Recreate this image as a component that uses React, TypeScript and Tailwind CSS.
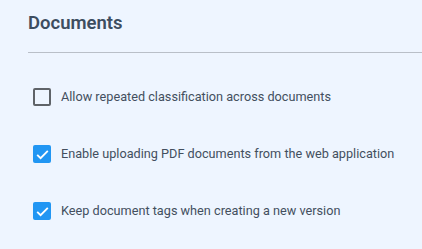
import { useState } from 'react'

const options = [
  { id: 'repeat', label: 'Allow repeated classification across documents', checked: false },
  { id: 'pdf', label: 'Enable uploading PDF documents from the web application', checked: true },
  { id: 'tags', label: 'Keep document tags when creating a new version', checked: true },
]

function Checkbox({ checked, onToggle }: { checked: boolean; onToggle: () => void }) {
  return (
    <button
      onClick={onToggle}
      className={`w-[18px] h-[18px] rounded-[2px] flex items-center justify-center shrink-0 ${
        checked ? 'bg-[#2196f3]' : 'border-2 border-[#5f6368]'
      }`}
    >
      {checked && (
        <svg viewBox="0 0 24 24" className="w-[17px] h-[17px]" fill="none" stroke="white" strokeWidth="2.6">
          <path d="M4.5 12.5l4.8 4.8L19.5 7" />
        </svg>
      )}
    </button>
  )
}

export default function App() {
  const [values, setValues] = useState(options.map((o) => o.checked))

  return (
    <div className="w-[422px] h-[249px] bg-[#eef5ff] pl-[28px] font-['Roboto',sans-serif] overflow-hidden">
      <h2 className="pt-[10px] h-[52px] text-[18.5px] font-semibold text-[#3d4d5f]">Documents</h2>
      <div className="h-px bg-[#b9bfc8]" />
      <div className="flex flex-col pt-[35px] gap-[39px] pl-[5px]">
        {options.map((o, i) => (
          <label key={o.id} className="flex items-center gap-[10px] h-[18px]">
            <Checkbox
              checked={values[i]}
              onToggle={() => setValues((v) => v.map((x, j) => (j === i ? !x : x)))}
            />
            <span className="text-[12.7px] text-[#434f5e]">{o.label}</span>
          </label>
        ))}
      </div>
    </div>
  )
}
